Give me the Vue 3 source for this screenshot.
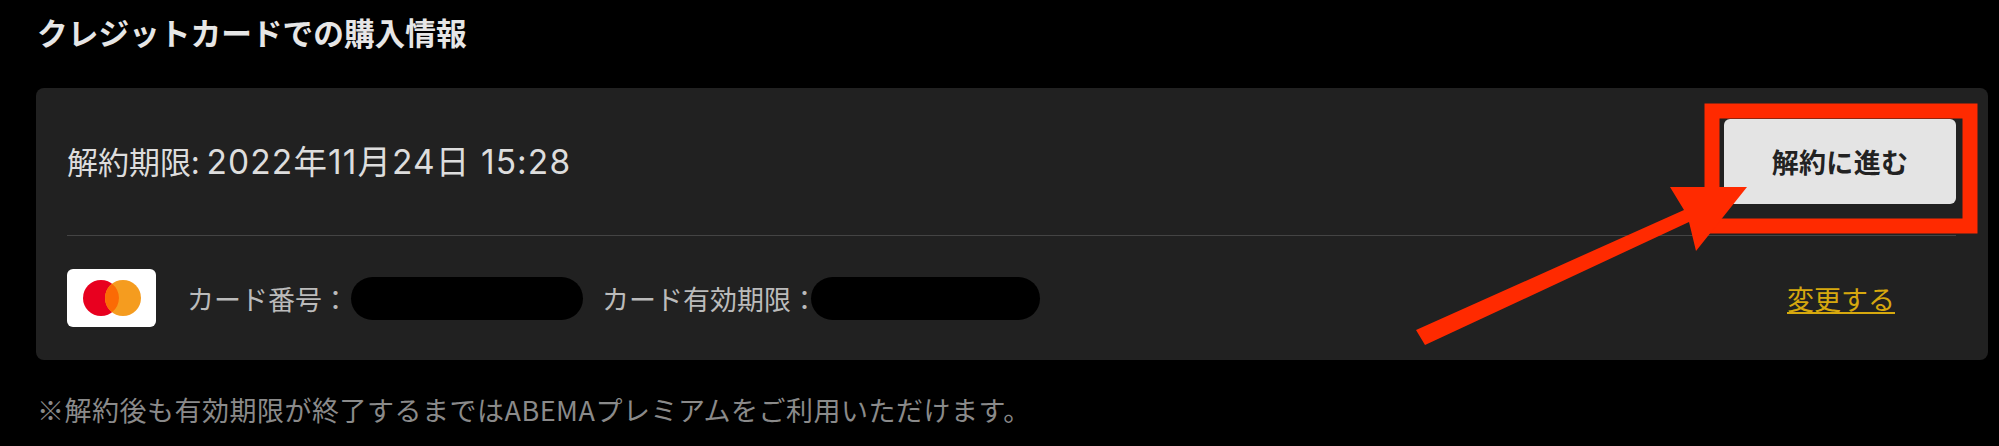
<script setup>
const title = 'クレジットカードでの購入情報'
</script>

<template>
  <main class="page">
    <h2 class="title">{{ title }}</h2>
    <section class="panel">
      <div class="top-row">
        <span class="deadline">解約期限: <span class="date">2022年11月24日 15:28</span></span>
        <button class="cancel">解約に進む</button>
      </div>
      <div class="card-row">
        <div class="brand">
          <svg width="58" height="36" viewBox="0 0 58 36">
            <circle cx="18" cy="18" r="18" fill="#e8001f" />
            <circle cx="40" cy="18" r="18" fill="#f59c1f" />
            <path d="M29 3.8a18 18 0 0 1 0 28.4a18 18 0 0 1 0-28.4z" fill="#fb6a05" />
          </svg>
        </div>
        <span class="label first">カード番号：</span>
        <span class="mask"></span>
        <span class="label second">カード有効期限：</span>
        <span class="mask short"></span>
        <a class="change">変更する</a>
      </div>
    </section>
    <p class="note">※解約後も有効期限が終了するまではABEMAプレミアムをご利用いただけます。</p>
    <svg class="annotation" width="1999" height="446" viewBox="0 0 1999 446">
      <rect x="1712" y="111" width="258" height="115" fill="none" stroke="#ff2a00" stroke-width="15" />
      <path d="M1416 330 L1684 210 L1670 187 L1747 187 L1696 251 L1689 222 L1425 345 Z" fill="#ff2a00" />
    </svg>
  </main>
</template>

<style scoped>
.page {
  position: relative;
  width: 1999px;
  height: 446px;
  overflow: hidden;
  background: #000;
  font-family: "Noto Sans CJK JP", "Noto Sans", sans-serif;
}
.title {
  margin: 0;
  padding: 14px 0 0 37px;
  height: 70px;
  box-sizing: border-box;
  color: #e6e6e6;
  font-size: 30.7px;
  line-height: 36px;
  font-weight: 700;
}
.panel {
  margin: 18px 11px 0 36px;
  padding: 0 32px 0 31px;
  height: 272px;
  box-sizing: border-box;
  background: #212121;
  border-radius: 8px;
}
.top-row {
  display: flex;
  align-items: center;
  justify-content: space-between;
  height: 148px;
  border-bottom: 1px solid #444;
  box-sizing: border-box;
}
.deadline {
  margin-bottom: 5px;
  color: #ddd;
  font-size: 31px;
}
.date {
  font-family: Inter, "Noto Sans CJK JP", sans-serif;
  font-size: 33.5px;
  letter-spacing: 1.1px;
}
.cancel {
  width: 232px;
  height: 85px;
  border: none;
  border-radius: 6px;
  background: #e4e4e4;
  color: #222;
  font-family: inherit;
  font-size: 27px;
  letter-spacing: 0.3px;
  font-weight: 700;
}
.card-row {
  display: flex;
  align-items: center;
  height: 124px;
}
.brand {
  display: flex;
  align-items: center;
  justify-content: center;
  width: 89px;
  height: 58px;
  border-radius: 6px;
  background: #fff;
  margin-right: 31px;
}
.label {
  color: #bbb;
  font-size: 27px;
}
.mask {
  flex: none;
  width: 232px;
  height: 43px;
  margin-left: 2px;
  border-radius: 22px;
  background: #000;
}
.mask.short {
  width: 229px;
  margin-left: -7px;
}
.second {
  margin-left: 19px;
}
.change {
  margin-left: auto;
  margin-right: 61px;
  color: #d6a80e;
  font-size: 27px;
  text-decoration: underline;
}
.note {
  margin: 32px 0 0 37px;
  color: #8a8a8a;
  font-size: 27px;
  letter-spacing: 0.5px;
  line-height: 36px;
}
.annotation {
  position: absolute;
  left: 0;
  top: 0;
  pointer-events: none;
}
</style>
